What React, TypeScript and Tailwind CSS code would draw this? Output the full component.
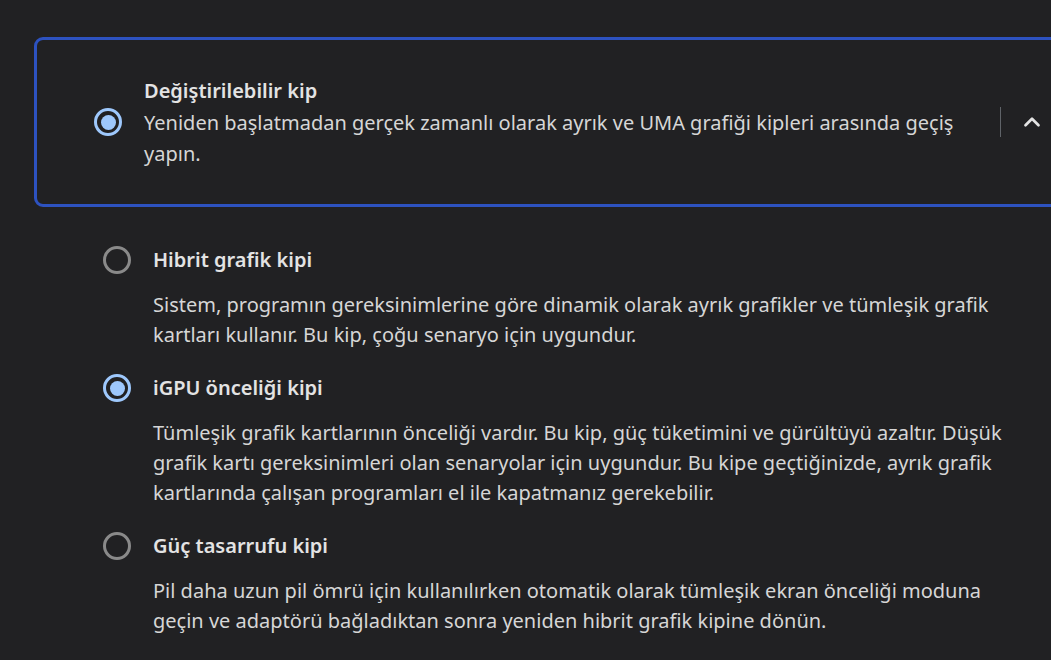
import { ChevronUp } from 'lucide-react';

type Option = {
  title: string;
  desc: string;
  checked?: boolean;
};

const OPTIONS: Option[] = [
  {
    title: 'Hibrit grafik kipi',
    desc: 'Sistem, programın gereksinimlerine göre dinamik olarak ayrık grafikler ve tümleşik grafik kartları kullanır. Bu kip, çoğu senaryo için uygundur.',
  },
  {
    title: 'iGPU önceliği kipi',
    desc: 'Tümleşik grafik kartlarının önceliği vardır. Bu kip, güç tüketimini ve gürültüyü azaltır. Düşük grafik kartı gereksinimleri olan senaryolar için uygundur. Bu kipe geçtiğinizde, ayrık grafik kartlarında çalışan programları el ile kapatmanız gerekebilir.',
    checked: true,
  },
  {
    title: 'Güç tasarrufu kipi',
    desc: 'Pil daha uzun pil ömrü için kullanılırken otomatik olarak tümleşik ekran önceliği moduna geçin ve adaptörü bağladıktan sonra yeniden hibrit grafik kipine dönün.',
  },
];

function Radio({ checked }: { checked?: boolean }) {
  if (checked) {
    return (
      <span className="flex h-[28px] w-[28px] shrink-0 items-center justify-center rounded-full border-[3px] border-[#9ec8fc]">
        <span className="h-[15px] w-[15px] rounded-full bg-[#9ec8fc]" />
      </span>
    );
  }
  return <span className="h-[28px] w-[28px] shrink-0 rounded-full border-[3px] border-[#8a8a8a]" />;
}

export default function App() {
  return (
    <div
      className="h-[660px] w-[1051px] overflow-hidden bg-[#212123] text-[#e3e3e3]"
      style={{ fontFamily: '"Noto Sans", "Open Sans", sans-serif' }}
    >
      <div className="pl-[34px] pt-[37px]">
        {/* selected card */}
        <div className="flex h-[170px] w-[1060px] items-center rounded-[9px] border-[3px] border-[#2d52c0] pl-[57px] pr-[40px]">
          <Radio checked />
          <div className="ml-[22px] w-[835px]">
            <div className="text-[20px] font-semibold leading-[32px] text-[#e3e3e3]">Değiştirilebilir kip</div>
            <div className="text-[20px] leading-[31px] text-[#d6d6d6]">
              Yeniden başlatmadan gerçek zamanlı olarak ayrık ve UMA grafiği kipleri arasında geçiş yapın.
            </div>
          </div>
          <div className="ml-[21px] h-[30px] w-px bg-[#5f6368]" />
          <ChevronUp className="ml-[18px] h-[26px] w-[26px] text-[#e3e3e3]" strokeWidth={2.5} />
        </div>

        {/* option list */}
        <div className="flex flex-col gap-[23px] pl-[69px] pt-[38px]">
          {OPTIONS.map((o) => (
            <div key={o.title} className="flex flex-col">
              <div className="flex items-center gap-[22px]">
                <Radio checked={o.checked} />
                <div className="text-[20px] font-semibold leading-[30px] text-[#e3e3e3]">{o.title}</div>
              </div>
              <div className="mt-[15px] w-[922px] pl-[50px] text-[20px] leading-[30px] text-[#d6d6d6]">{o.desc}</div>
            </div>
          ))}
        </div>
      </div>
    </div>
  );
}
